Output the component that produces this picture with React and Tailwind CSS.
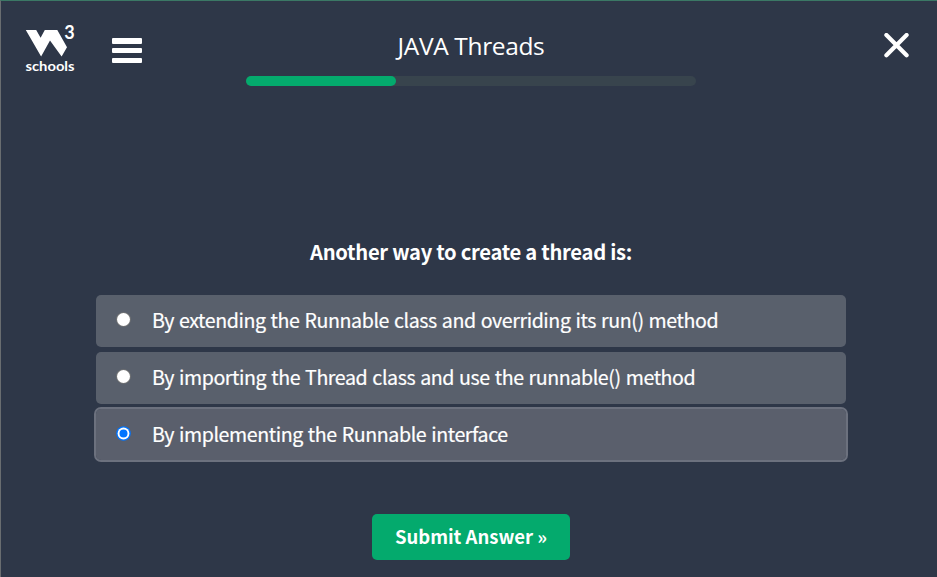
import React, { useState } from "react";

const OPTIONS = [
  "By extending the Runnable class and overriding its run() method",
  "By importing the Thread class and use the runnable() method",
  "By implementing the Runnable interface",
];

function Logo() {
  return (
    <a className="block h-[54px] w-[54px]" aria-label="W3Schools">
      <svg width="54" height="54" viewBox="-1 -4 54 54" fill="#fff" overflow="visible">
        <path d="M0.8 5H11.2L15.6 12.8L19.8 5H32.3L42 22.2L36.6 31.5L25 15.6L16.1 31.5Z" />
        <text x="39.2" y="14.4" fontSize="18" fontWeight="700" className="font-[Lato,sans-serif]">3</text>
        <text x="0.5" y="45.6" fontSize="13.5" fontWeight="700" className="font-[Lato,sans-serif]" textLength="49" lengthAdjust="spacingAndGlyphs">schools</text>
      </svg>
    </a>
  );
}

function Header() {
  return (
    <header className="flex h-[85px] justify-between">
      <div className="flex w-[245px] pl-[23px] pt-[20px]">
        <Logo />
        <button className="ml-[33.5px] mt-[17px] flex h-[25px] w-[30px] flex-col justify-between" aria-label="Menu">
          <span className="h-[5.5px] w-full rounded-[1px] bg-white" />
          <span className="h-[5.5px] w-full rounded-[1px] bg-white" />
          <span className="h-[5.5px] w-full rounded-[1px] bg-white" />
        </button>
      </div>
      <div className="w-[450px] pt-[27px]">
        <h1 className="h-[48px] text-center font-['Open_Sans','Noto_Sans',sans-serif] text-[24.5px] leading-[35px] tracking-[-0.36px] text-white">JAVA Threads</h1>
        <div className="h-[10px] rounded-full bg-[#38444d]">
          <div className="h-full w-[150px] rounded-full bg-[#04aa6d]" />
        </div>
      </div>
      <div className="flex w-[241px] justify-end pr-[28px] pt-[32px]">
        <svg width="25" height="25" viewBox="0 0 25 25" fill="none" stroke="#fff" strokeWidth="4.2">
          <path d="M2.4 2L22.6 22.2M22.6 2L2.4 22.2" strokeLinecap="round" />
        </svg>
      </div>
    </header>
  );
}

function Radio({ checked }) {
  return (
    <svg className="mt-[17px] h-[15px] w-[15px]" viewBox="0 0 15 15">
      <circle cx="7.5" cy="7.5" r="7.3" fill={checked ? "#0075ff" : "#767676"} />
      <circle cx="7.5" cy="7.5" r={checked ? 5.9 : 6.5} fill="#fff" />
      {checked && <circle cx="7.5" cy="7.5" r="4" fill="#0075ff" />}
    </svg>
  );
}

export default function App() {
  const [selected, setSelected] = useState(2);
  return (
    <div className="h-[577px] w-[937px] overflow-hidden border-l border-t border-l-[#696d70] border-t-[#3b7865] bg-[#2e3748] font-['Noto_Sans_CJK_SC',sans-serif] text-white">
      <Header />
      <main className="flex flex-col items-center pr-[1px] pl-[5px]">
        <h2 className="mt-[150px] h-8 text-[20.2px] font-bold leading-8 tracking-[-0.29px]">Another way to create a thread is:</h2>
        <div className="mt-[27px] flex h-[166px] w-[750px] flex-col gap-[5px]">
          {OPTIONS.map((text, i) => (
            <label
              key={text}
              onClick={() => setSelected(i)}
              className={
                "flex shrink-0 rounded-[5px] pl-5 " +
                (selected === i ? "h-[51px] bg-[#5a5f6c] outline-2 outline-[#6c717e]" : "h-[52px] bg-[#59606c]")
              }
            >
              <Radio checked={selected === i} />
              <span className="ml-[21px] whitespace-nowrap text-[19.6px] leading-[50px] tracking-[-0.41px] [word-spacing:1px] [-webkit-text-stroke:0.2px_white]">{text}</span>
            </label>
          ))}
        </div>
        <button className="mt-[53px] h-[46px] w-[198px] rounded-[5px] bg-[#04aa6d] pb-[2px] text-[18.5px] font-bold leading-[42px]">
          Submit Answer »
        </button>
      </main>
    </div>
  );
}
